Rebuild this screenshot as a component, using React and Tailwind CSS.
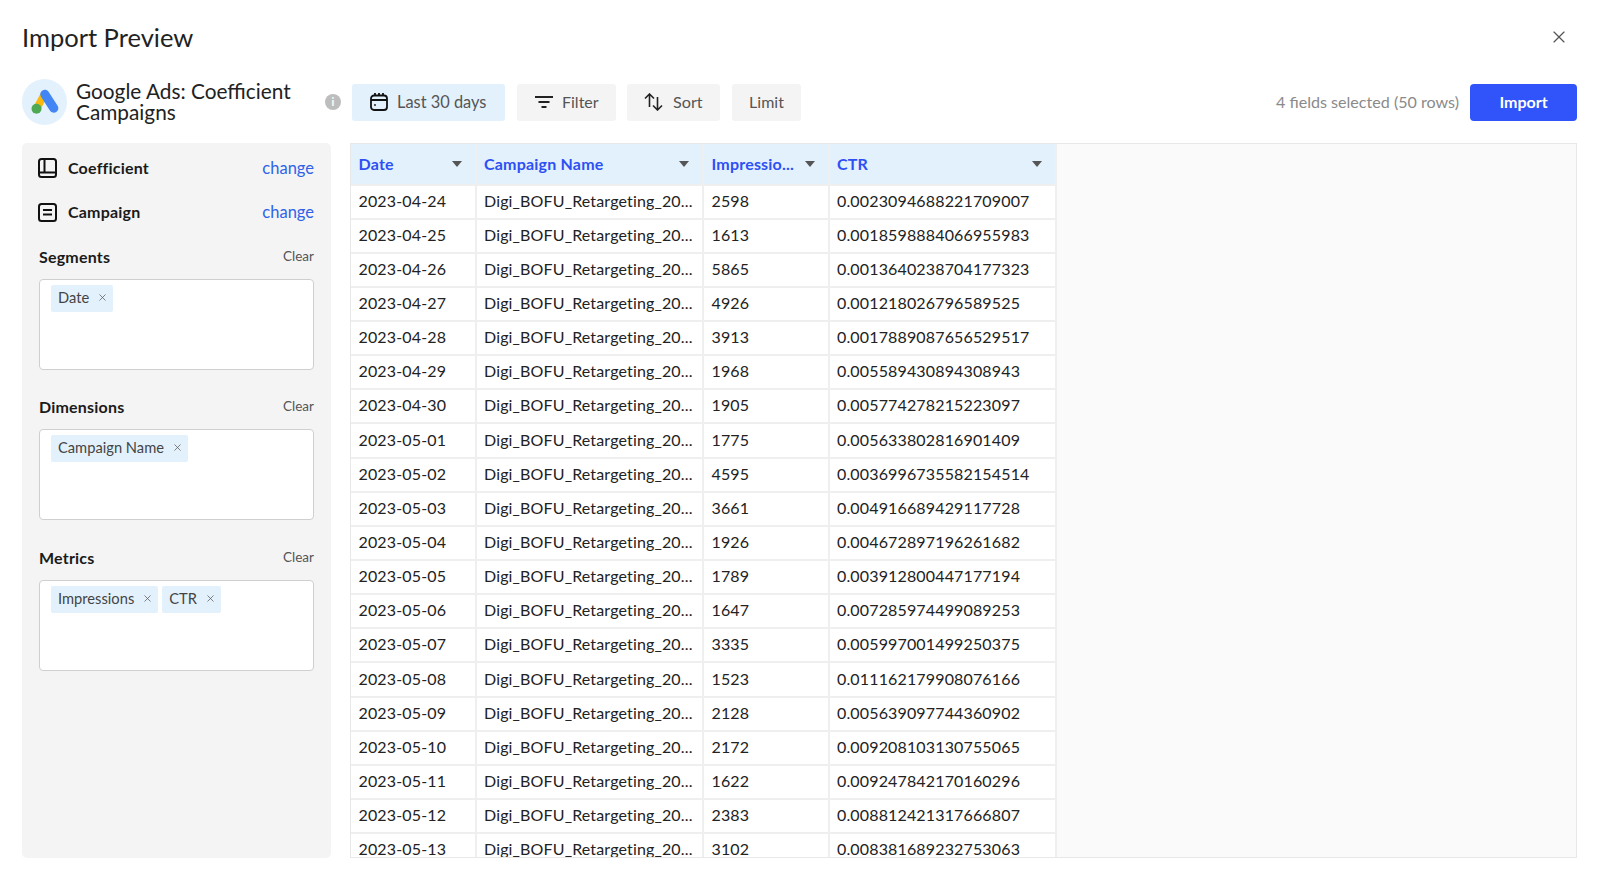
import { X } from 'lucide-react'

const ROWS = [
  ['2023-04-24', '2598', '0.0023094688221709007'],
  ['2023-04-25', '1613', '0.0018598884066955983'],
  ['2023-04-26', '5865', '0.0013640238704177323'],
  ['2023-04-27', '4926', '0.001218026796589525'],
  ['2023-04-28', '3913', '0.0017889087656529517'],
  ['2023-04-29', '1968', '0.005589430894308943'],
  ['2023-04-30', '1905', '0.005774278215223097'],
  ['2023-05-01', '1775', '0.005633802816901409'],
  ['2023-05-02', '4595', '0.0036996735582154514'],
  ['2023-05-03', '3661', '0.004916689429117728'],
  ['2023-05-04', '1926', '0.004672897196261682'],
  ['2023-05-05', '1789', '0.003912800447177194'],
  ['2023-05-06', '1647', '0.007285974499089253'],
  ['2023-05-07', '3335', '0.005997001499250375'],
  ['2023-05-08', '1523', '0.011162179908076166'],
  ['2023-05-09', '2128', '0.005639097744360902'],
  ['2023-05-10', '2172', '0.009208103130755065'],
  ['2023-05-11', '1622', '0.009247842170160296'],
  ['2023-05-12', '2383', '0.008812421317666807'],
  ['2023-05-13', '3102', '0.008381689232753063'],
]

const CAMPAIGN = 'Digi_BOFU_Retargeting_20...'

function GoogleAdsLogo() {
  return (
    <svg width="28" height="26" viewBox="0 0 28 26">
      <line x1="13" y1="6" x2="6" y2="19" stroke="#f9b90f" strokeWidth="7.5" strokeLinecap="round" />
      <line x1="13.8" y1="5.2" x2="22.8" y2="19.2" stroke="#4285f4" strokeWidth="9" strokeLinecap="round" />
      <circle cx="5.5" cy="19.8" r="5" fill="#4fa852" />
    </svg>
  )
}

function BookIcon() {
  return (
    <svg width="19" height="20" viewBox="0 0 19 20" fill="none" stroke="#111" strokeWidth="2" strokeLinejoin="round">
      <rect x="1" y="1" width="17" height="18" rx="2.5" />
      <path d="M6.5 1v12.5M1 14.5h17" />
    </svg>
  )
}

function ListBoxIcon() {
  return (
    <svg width="19" height="19" viewBox="0 0 19 19" fill="none" stroke="#111" strokeWidth="2">
      <rect x="1" y="1" width="17" height="17" rx="2.5" />
      <path d="M5 7h9M5 11.5h9" />
    </svg>
  )
}

function CalendarIcon() {
  return (
    <svg width="18" height="18" viewBox="0 0 18 18" fill="none" stroke="#111" strokeWidth="1.8">
      <rect x="1" y="2.5" width="16" height="14.5" rx="3" />
      <path d="M1 7h16M5 0v3M9 0v3M13 0v3" />
      <circle cx="5" cy="12" r="0.9" fill="#111" stroke="none" />
    </svg>
  )
}

function FilterIcon() {
  return (
    <svg width="18" height="14" viewBox="0 0 18 14" fill="none" stroke="#222" strokeWidth="2">
      <path d="M0 2h18M3.5 7h11M6.5 12h5" />
    </svg>
  )
}

function SortIcon() {
  return (
    <svg width="19" height="18" viewBox="0 0 19 18" fill="none" stroke="#222" strokeWidth="1.6">
      <path d="M5.5 14V1M1 5.5l4.5-4.5 4.5 4.5" />
      <path d="M13.5 4v13M9 12.5l4.5 4.5 4.5-4.5" />
    </svg>
  )
}

function SourceRow({ icon, label, className }) {
  return (
    <div className={`flex items-center justify-between ${className}`}>
      <div className="flex items-center gap-[11px]">
        {icon}
        <span className="text-[16px] font-bold tracking-[0.2px] text-[#1a1a1a]">{label}</span>
      </div>
      <span className="text-[16.5px] text-[#2f62e8]">change</span>
    </div>
  )
}

function Chip({ label }) {
  return (
    <span className="flex h-[27px] items-center gap-[8px] rounded-[2px] bg-[#e3f1fd] pb-[1px] pl-[7px] pr-[5px] text-[14.7px] text-[#444]">
      {label}
      <X size={11} strokeWidth={1.6} className="text-[#555]" />
    </span>
  )
}

function FieldGroup({ title, chips, className }) {
  return (
    <div className={className}>
      <div className="flex h-[20px] items-center justify-between">
        <span className="text-[16px] font-bold tracking-[0.2px] text-[#1a1a1a]">{title}</span>
        <span className="text-[13.5px] text-[#555]">Clear</span>
      </div>
      <div className="mt-[12px] flex h-[91px] items-start gap-[4px] rounded-[4px] border border-[#cfcfcf] bg-white pl-[11px] pt-[5px]">
        {chips.map((c) => (
          <Chip key={c} label={c} />
        ))}
      </div>
    </div>
  )
}

function HeaderCell({ label }) {
  return (
    <div className="flex h-[41.5px] items-center justify-between border-r-2 border-b-2 border-[#efefef] bg-[#e3f1fd] pl-[7.5px] pr-[13px]">
      <span className="text-[16px] font-bold tracking-[0.2px] whitespace-nowrap text-[#2d50f5]">{label}</span>
      <span className="ml-[10px] shrink-0 border-x-[5.5px] border-t-[6px] border-x-transparent border-t-[#555]" />
    </div>
  )
}

function Cell({ children }) {
  return (
    <div className="flex h-[34.15px] items-center border-r-2 border-b-2 border-[#efefef] bg-white pb-[2px] pl-[7.5px] text-[16px] tracking-[0.15px] whitespace-nowrap text-[#222]">
      {children}
    </div>
  )
}

export default function App() {
  return (
    <div className="flex h-[879px] flex-col bg-white pl-[22px] pr-[23px] font-['Lato','Liberation_Sans',sans-serif]">
      {/* Title bar */}
      <div className="flex h-[79px] shrink-0 items-center justify-between pb-[5px]">
        <h1 className="text-[25.5px] font-normal text-[#222]">Import Preview</h1>
        <X size={20} strokeWidth={1.4} className="mr-[8px] text-[#555]" />
      </div>

      {/* Toolbar */}
      <div className="flex h-[46px] shrink-0 items-center">
        <div className="flex h-[46px] w-[45px] items-center justify-center rounded-full bg-[#e3f1fd]">
          <GoogleAdsLogo />
        </div>
        <div className="ml-[9px] w-[236px] pb-[2px] text-[20.8px] leading-[21px] text-[#222]">Google Ads: Coefficient Campaigns</div>
        <span className="ml-[13px] flex h-[16px] w-[16px] items-center justify-center rounded-full bg-[#bdbdbd] text-[11px] font-bold text-white">i</span>
        <div className="ml-[11px] flex h-[37px] w-[153px] items-center gap-[9px] rounded-[3px] bg-[#e3f1fd] pl-[18px] text-[16.4px] text-[#555]">
          <CalendarIcon />
          Last 30 days
        </div>
        <div className="ml-[12px] flex h-[37px] w-[99px] items-center gap-[9px] rounded-[3px] bg-[#f4f4f4] pl-[18px] text-[16px] text-[#555]">
          <FilterIcon />
          Filter
        </div>
        <div className="ml-[11px] flex h-[37px] w-[93px] items-center gap-[10px] rounded-[3px] bg-[#f4f4f4] pl-[17px] text-[16.2px] text-[#555]">
          <SortIcon />
          Sort
        </div>
        <div className="ml-[12px] flex h-[37px] w-[69px] items-center justify-center rounded-[3px] bg-[#f4f4f4] text-[16px] text-[#555]">Limit</div>
        <span className="ml-auto text-[16.1px] text-[#8a8a8a]">4 fields selected (50 rows)</span>
        <button className="ml-[11px] h-[37px] w-[107px] rounded-[4px] bg-[#3153fa] text-[16px] font-bold text-white">Import</button>
      </div>

      {/* Body */}
      <div className="mt-[18px] flex h-[715px] shrink-0 gap-[19px]">
        <aside className="w-[309px] shrink-0 rounded-[5px] bg-[#f4f4f4] pl-[16px] pr-[17px] pt-[13px]">
          <SourceRow icon={<BookIcon />} label="Coefficient" />
          <SourceRow icon={<ListBoxIcon />} label="Campaign" className="mt-[19px]" />
          <div className="pl-[1px]">
            <FieldGroup title="Segments" chips={['Date']} className="mt-[22px]" />
            <FieldGroup title="Dimensions" chips={['Campaign Name']} className="mt-[27px]" />
            <FieldGroup title="Metrics" chips={['Impressions', 'CTR']} className="mt-[28px]" />
          </div>
        </aside>

        <div className="flex-1 overflow-hidden border border-[#e8e8e8] bg-[#fafafa]">
          <div className="grid w-[706px] grid-cols-[125.5px_227.5px_125.5px_227.5px]">
            {['Date', 'Campaign Name', 'Impressio...', 'CTR'].map((h) => (
              <HeaderCell key={h} label={h} />
            ))}
            {ROWS.map(([date, imp, ctr]) => [
              <Cell key={date + 'd'}>{date}</Cell>,
              <Cell key={date + 'c'}>{CAMPAIGN}</Cell>,
              <Cell key={date + 'i'}>{imp}</Cell>,
              <Cell key={date + 'r'}>{ctr}</Cell>,
            ])}
          </div>
        </div>
      </div>
    </div>
  )
}
